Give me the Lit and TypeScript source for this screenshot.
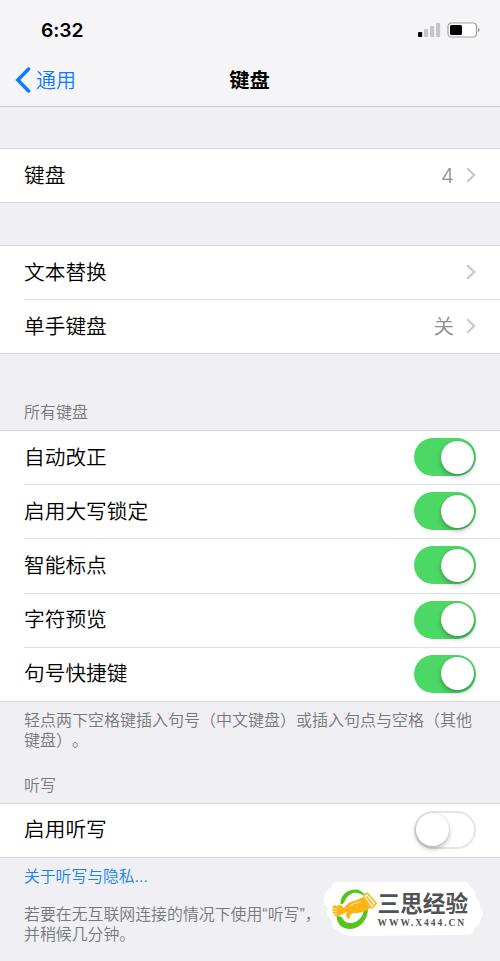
import { LitElement, html, css, svg, nothing } from "lit";
import { customElement, property } from "lit/decorators.js";

@customElement("ios-switch")
class IosSwitch extends LitElement {
  @property({ type: Boolean }) on = false;

  static styles = css`
    :host { display: block; flex: none; margin-bottom: 1px; }
    .track {
      box-sizing: border-box;
      display: flex;
      align-items: center;
      width: 62px;
      height: 38px;
      padding: 2px;
      border-radius: 19px;
      background: #fff;
      box-shadow: inset 0 0 0 2px #e5e5e7;
    }
    .track.on { background: #4cd864; box-shadow: none; justify-content: flex-end; }
    .knob {
      width: 33px;
      height: 33px;
      border-radius: 50%;
      background: #fff;
      box-shadow: 0 3px 5px rgba(0, 0, 0, 0.26), 0 0 2px rgba(0, 0, 0, 0.14);
    }
  `;

  render() {
    return html`<div class="track ${this.on ? "on" : ""}"><div class="knob"></div></div>`;
  }
}

@customElement("settings-row")
class SettingsRow extends LitElement {
  @property() label = "";
  @property() value = "";
  @property() kind = "link";
  @property({ type: Boolean }) on = false;

  static styles = css`
    :host { display: block; height: 54px; padding-left: 24px; background: #fff; }
    .row {
      box-sizing: border-box;
      height: 100%;
      display: flex;
      align-items: center;
      padding-right: 24px;
      border-bottom: 1px solid var(--line, #dfdfe3);
    }
    .label { flex: 1; font-size: 20.7px; line-height: 30px; color: #000; }
    .value { font-size: 20.5px; line-height: 30px; color: #8e8e93; margin-right: 12px; }
    .chevron { display: block; width: 10px; height: 16px; margin-bottom: 1px; }
  `;

  render() {
    return html`<div class="row">
      <span class="label">${this.label}</span>
      ${this.kind === "switch"
        ? html`<ios-switch ?on=${this.on}></ios-switch>`
        : html`${this.value ? html`<span class="value">${this.value}</span>` : nothing}
            <svg class="chevron" viewBox="0 0 10 16">
              <path d="M1.2 1.2 L8.2 8 L1.2 14.8" fill="none" stroke="#c7c7cc" stroke-width="2.1" />
            </svg>`}
    </div>`;
  }
}

@customElement("site-badge")
class SiteBadge extends LitElement {
  static styles = css`
    :host { display: block; position: relative; width: 160px; height: 56px; }
    .plate { position: absolute; inset: 0; width: 160px; height: 56px; }
    .words {
      position: absolute;
      left: 54.5px;
      top: 10px;
      display: flex;
      flex-direction: column;
      white-space: nowrap;
      color: #525254;
    }
    .name {
      font: 700 22.7px/27px "Liberation Sans", "Noto Sans CJK SC", sans-serif;
    }
    .site {
      font: 700 9.5px/10px "Liberation Serif", serif;
      letter-spacing: 1.95px;
    }
  `;

  render() {
    return html`
      <svg class="plate" viewBox="0 0 160 56">
        <path fill="#fff" d="M10 2 Q13 0 18 1 H139 Q146 0 147 6 Q153 8 152 15 Q158 20 157 26 Q162 32 158 38 Q157 44 152 46 Q151 54 142 54 L30 55 Q18 55 15 49 Q8 48 9 40 Q2 34 5 28 Q-2 20 2 14 Q3 8 8 7 Z" />
        <path fill="#55c51c" d="M17.5 22.5 C17 15 24 8 33 8.5 C38 9 41 12 42.5 15.5 C38 12.5 34 11 30 12 C25 14 23 17 21 21.5 C20 23.5 17.8 24 17.5 22.5 Z" />
        <path fill="#55c51c" d="M13.5 35.5 C17 34.5 19.5 36 20.5 39 C24 43.5 32 43 36.5 38 C39.5 35 40 33 40.5 30 L45 27.5 C45 38 38 47.5 27 48 C19 48 14 43 13.5 35.5 Z" />
        <path fill="#fdb515" d="M10 25 Q12 23.5 14 25 Q17 23 19.5 25.5 L21 27 C24 22 29 20 34 19 L40 16 L47 27 C43 31 37 32 32 32 C27 32.5 26.5 34.5 27 38 C23 37.5 22 34 24 31.5 C21 31 19.5 34 15 35 C12 36 10.5 34.5 12 32.8 C9.5 33 9 31.2 10.8 30.4 C8.5 29.5 8.8 27.7 11 27.8 C9.5 27 9 26 10 25 Z" />
        <path fill="none" stroke="#fdb515" stroke-width="1.7" stroke-linejoin="round" d="M41 13.5 L44.5 12.2 L53.3 22.5 L48.5 27.5 M40.5 15.5 L48 27" />
        <path fill="none" stroke="#fdb515" stroke-width="1.7" d="M43.5 15.5 L50 24" />
        <path fill="none" stroke="#fff" stroke-width="0.6" d="M26 26 C29 22.5 33 22 38 21 M11 27.9 H14 M11 30.4 H14 M12 32.8 H14.5" />
      </svg>
      <div class="words">
        <span class="name">三思经验</span>
        <span class="site">WWW.X444.CN</span>
      </div>
    `;
  }
}

const toggles = ["自动改正", "启用大写锁定", "智能标点", "字符预览", "句号快捷键"];

const signalBars = [
  { x: 0, h: 5, c: "#000" },
  { x: 6, h: 8, c: "#c6c6c8" },
  { x: 12, h: 11, c: "#c6c6c8" },
  { x: 18, h: 14, c: "#c6c6c8" },
];

@customElement("app-root")
class AppRoot extends LitElement {
  static styles = css`
    :host {
      display: block;
      position: relative;
      box-sizing: border-box;
      width: 500px;
      height: 961px;
      overflow: hidden;
      background: #efeff4;
      font-family: Inter, "Noto Sans CJK SC", sans-serif;
      font-weight: 350;
      text-spacing-trim: space-all;
    }
    .top {
      box-sizing: border-box;
      height: 107px;
      background: #f5f5f7;
      border-bottom: 1px solid #c9c9d2;
    }
    .status {
      display: flex;
      justify-content: space-between;
      align-items: center;
      height: 60px;
      padding: 0 20px 0 41px;
    }
    .time { font: 600 19.3px/24px Inter, sans-serif; letter-spacing: -0.1px; color: #000; }
    .indicators { display: block; width: 62px; height: 16px; }
    .nav {
      display: grid;
      grid-template-columns: 1fr auto 1fr;
      align-items: center;
      height: 40px;
      padding: 0 16px 0 15px;
    }
    .back { display: flex; align-items: center; gap: 5px; color: #0b7bff; font-size: 20px; line-height: 30px; }
    .back svg { display: block; width: 16px; height: 26px; }
    .back span { padding-top: 2px; }
    .title { font-size: 20.3px; line-height: 30px; font-weight: 700; color: #000; padding-top: 2px; }
    .group { display: block; border-top: 1px solid #d6d6dc; margin-top: 42px; background: #fff; }
    .group.first { margin-top: 41px; }
    .group settings-row:last-child {
      --line: #d6d6dc;
      padding-left: 0;
      text-indent: 24px;
    }
    .group settings-row.tall { height: 54.2px; }
    .caption { font-size: 16px; line-height: 20px; color: #77777c; padding: 0 24px; }
    .all { margin-top: 48px; }
    .all + .group, .dictation + .group { margin-top: 8px; }
    .note { margin-top: 8px; white-space: nowrap; }
    .dictation { margin-top: 25px; }
    .more { color: #1682f5; margin-top: 9px; font-size: 15.8px; }
    .hint {
      margin-top: 18px;
      font-size: 15.9px;
      font-family: "Liberation Sans", "Noto Sans CJK SC", sans-serif;
      white-space: nowrap;
    }
    .badge { position: absolute; left: 323px; top: 881px; }
  `;

  render() {
    return html`
      <header class="top">
        <div class="status">
          <span class="time">6:32</span>
          <svg class="indicators" viewBox="0 0 62 16">
            ${signalBars.map((b) => svg`<rect x=${b.x} y=${15 - b.h} width="4.2" height=${b.h} rx="1" fill=${b.c} />`)}
            <rect x="30" y="1" width="28.5" height="14" rx="3.5" fill="#fff" stroke="#a3a3a6" stroke-width="1.2" />
            <rect x="32" y="3" width="12" height="10" rx="1.5" fill="#000" />
            <path d="M60 5.8 Q63 8 60 10.2 Z" fill="#8f8f92" />
          </svg>
        </div>
        <nav class="nav">
          <span class="back">
            <svg viewBox="0 0 16 26">
              <path d="M13.6 2 L2.8 13 L13.6 24" fill="none" stroke="#0b7bff" stroke-width="3.4" stroke-linecap="round" stroke-linejoin="miter" />
            </svg>
            <span>通用</span>
          </span>
          <span class="title">键盘</span>
        </nav>
      </header>

      <section class="group first">
        <settings-row label="键盘" value="4"></settings-row>
      </section>

      <section class="group">
        <settings-row label="文本替换"></settings-row>
        <settings-row label="单手键盘" value="关"></settings-row>
      </section>

      <div class="caption all">所有键盘</div>
      <section class="group">
        ${toggles.map((t) => html`<settings-row class="tall" kind="switch" label=${t} on></settings-row>`)}
      </section>
      <div class="caption note">轻点两下空格键插入句号（中文键盘）或插入句点与空格（其他<br />键盘）。</div>

      <div class="caption dictation">听写</div>
      <section class="group">
        <settings-row kind="switch" label="启用听写"></settings-row>
      </section>
      <div class="caption more">关于听写与隐私...</div>
      <div class="caption hint">若要在无互联网连接的情况下使用“听写”，<br />并稍候几分钟。</div>

      <site-badge class="badge"></site-badge>
    `;
  }
}
